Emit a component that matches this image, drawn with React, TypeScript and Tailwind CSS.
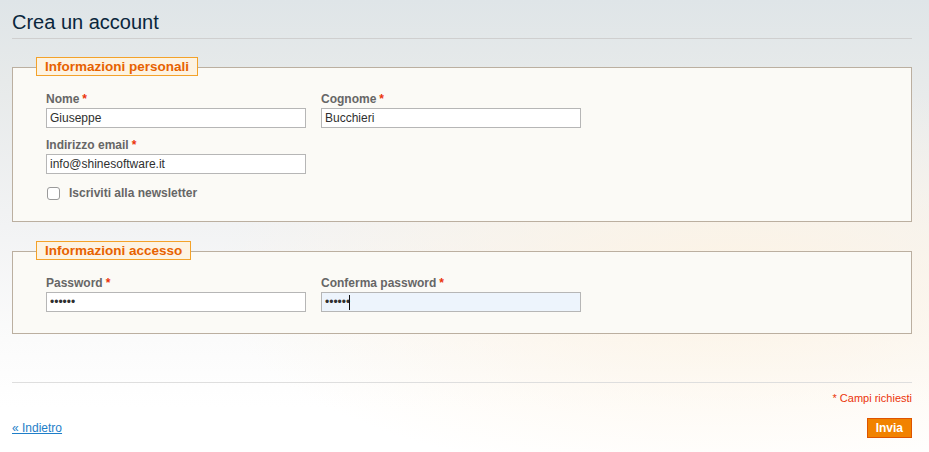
import React from "react";

const Req = () => <span className="text-[#eb340a] ml-[3px]">*</span>;

function Field({ label, value, type = "text", focused = false }: { label: string; value: string; type?: string; focused?: boolean }) {
  return (
    <div className="flex flex-col">
      <label className="block h-[16px] leading-[16px] text-[12px] font-bold text-[#666] mb-px">
        {label}
        <Req />
      </label>
      <div className="relative w-[260px] h-[20px]">
        <input
          type={type}
          defaultValue={value}
          readOnly
          className={`block w-[260px] h-[20px] border border-[#b6b6b6] px-[3px] text-[12px] text-[#2f2f2f] outline-none ${focused ? "bg-[#edf4fc]" : "bg-white"}`}
          style={{ fontFamily: '"Liberation Sans", Arial, sans-serif' }}
        />
        {focused && <span className="absolute left-[28px] top-[3px] w-px h-[15px] bg-[#111]" />}
      </div>
    </div>
  );
}

function Box({ title, children, className = "" }: { title: string; children: React.ReactNode; className?: string }) {
  return (
    <section className={`relative border border-[#bbafa0] bg-[#fbfaf6] pl-[33px] pt-[23px] pb-[21px] ${className}`}>
      <h2 className="absolute left-[23px] top-[-11px] h-[19px] leading-[17px] px-[8px] border border-[#f3a22a] bg-[#fdf3e2] text-[13.5px] font-bold text-[#e76200]">
        {title}
      </h2>
      {children}
    </section>
  );
}

export default function App() {
  return (
    <div
      className="h-[452px] w-[929px] bg-[radial-gradient(ellipse_55%_45%_at_78%_62%,rgba(253,243,228,0.95),rgba(253,243,228,0)),linear-gradient(180deg,#dfe5e8_0%,#e7eaea_18%,#f2f3f4_50%,#fbfbfb_75%,#ffffff_90%)]"
      style={{ fontFamily: '"Liberation Sans", Arial, sans-serif' }}
    >
      <div className="ml-[12px] w-[900px] pt-[10px]">
        <h1 className="text-[20px] leading-[24px] text-[#0a263c] pb-[4px] border-b border-[#cfcfcf]">Crea un account</h1>

        <Box title="Informazioni personali" className="mt-[28px]">
          <div className="grid grid-cols-[275px_275px]">
            <Field label="Nome" value="Giuseppe" />
            <Field label="Cognome" value="Bucchieri" />
          </div>
          <div className="mt-[9px]">
            <Field label="Indirizzo email" value="info@shinesoftware.it" />
          </div>
          <label className="mt-[13px] flex items-center h-[13px] gap-[9px] pl-px">
            <input type="checkbox" className="appearance-none w-[13px] h-[13px] border border-[#9a9a9a] rounded-[3px] bg-white" />
            <span className="text-[12px] font-bold text-[#666] leading-[13px]">Iscriviti alla newsletter</span>
          </label>
        </Box>

        <Box title="Informazioni accesso" className="mt-[29px]">
          <div className="grid grid-cols-[275px_275px]">
            <Field label="Password" value="123456" type="password" />
            <Field label="Conferma password" value="123456" type="password" focused />
          </div>
        </Box>

        <div className="mt-[48px] border-t border-[#dedede]" />
        <p className="mt-[9px] text-right text-[11px] leading-[13px] text-[#eb340a]">* Campi richiesti</p>
        <div className="mt-[13px] flex items-center justify-between">
          <a href="#" className="text-[12px] text-[#1e7ec8] underline leading-[14px]">« Indietro</a>
          <button className="h-[20px] px-[8px] bg-[#f18200] border border-[#de5400] text-white text-[12px] font-bold leading-[18px]">
            Invia
          </button>
        </div>
      </div>
    </div>
  );
}
